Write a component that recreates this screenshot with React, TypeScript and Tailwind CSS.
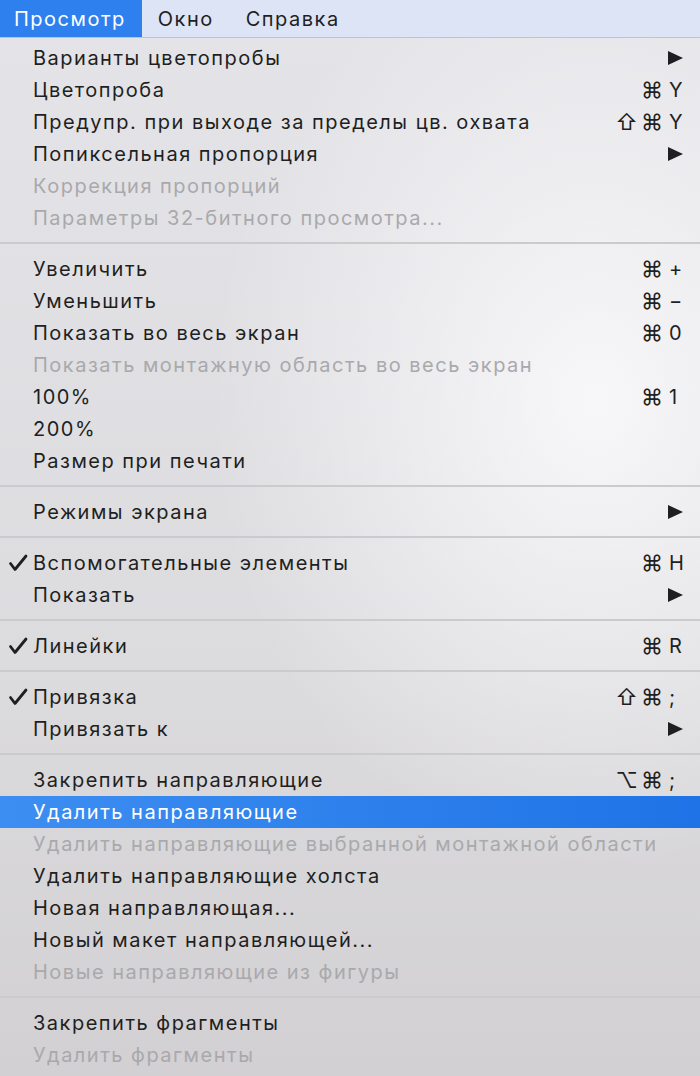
import React from "react";

type Item = {
  label: string;
  mods?: string;
  key?: string;
  sub?: boolean;
  disabled?: boolean;
  checked?: boolean;
  active?: boolean;
};

const sections: Item[][] = [
  [
    { label: "Варианты цветопробы", sub: true },
    { label: "Цветопроба", mods: "⌘", key: "Y" },
    { label: "Предупр. при выходе за пределы цв. охвата", mods: "⇧⌘", key: "Y" },
    { label: "Попиксельная пропорция", sub: true },
    { label: "Коррекция пропорций", disabled: true },
    { label: "Параметры 32-битного просмотра...", disabled: true },
  ],
  [
    { label: "Увеличить", mods: "⌘", key: "+" },
    { label: "Уменьшить", mods: "⌘", key: "−" },
    { label: "Показать во весь экран", mods: "⌘", key: "0" },
    { label: "Показать монтажную область во весь экран", disabled: true },
    { label: "100%", mods: "⌘", key: "1" },
    { label: "200%" },
    { label: "Размер при печати" },
  ],
  [{ label: "Режимы экрана", sub: true }],
  [
    { label: "Вспомогательные элементы", mods: "⌘", key: "H", checked: true },
    { label: "Показать", sub: true },
  ],
  [{ label: "Линейки", mods: "⌘", key: "R", checked: true }],
  [
    { label: "Привязка", mods: "⇧⌘", key: ";", checked: true },
    { label: "Привязать к", sub: true },
  ],
  [
    { label: "Закрепить направляющие", mods: "⌥⌘", key: ";" },
    { label: "Удалить направляющие", active: true },
    { label: "Удалить направляющие выбранной монтажной области", disabled: true },
    { label: "Удалить направляющие холста" },
    { label: "Новая направляющая..." },
    { label: "Новый макет направляющей..." },
    { label: "Новые направляющие из фигуры", disabled: true },
  ],
  [
    { label: "Закрепить фрагменты" },
    { label: "Удалить фрагменты", disabled: true },
  ],
];

function Check() {
  return (
    <svg width="20" height="18" viewBox="0 0 20 18" className="shrink-0">
      <path d="M2.5 9.5 L7 15.5 L18 2" fill="none" stroke="#1f1f21" strokeWidth="2.8" strokeLinecap="round" strokeLinejoin="round" />
    </svg>
  );
}

function Arrow() {
  return (
    <svg width="15" height="14" viewBox="0 0 15 14">
      <polygon points="0,0 15,7 0,14" fill="#1f1f21" />
    </svg>
  );
}

function Row({ item }: { item: Item }) {
  const color = item.active ? "text-white" : item.disabled ? "text-[#a9a9ac]" : "text-[#1f1f21]";
  return (
    <div
      className={`flex h-[32px] items-center ${color} ${
        item.active ? "bg-[linear-gradient(to_right,#3d8ef2,#1f73e6)]" : ""
      }`}
    >
      <div className="flex w-[33px] shrink-0 justify-center pl-[2px]">{item.checked ? <Check /> : null}</div>
      <div className="min-w-0 flex-1 whitespace-nowrap tracking-[1.5px]">{item.label}</div>
      {item.sub ? (
        <div className="shrink-0 pr-[17px]">
          <Arrow />
        </div>
      ) : item.key ? (
        <div className="flex shrink-0 items-center pr-[14px]">
          <span className="text-[22px] tracking-[3px]">{item.mods}</span>
          <span className="w-[20px] pl-[3px] text-left">{item.key}</span>
        </div>
      ) : null}
    </div>
  );
}

export default function App() {
  return (
    <div
      className="h-[1076px] w-[700px] overflow-hidden text-[20px] leading-none"
      style={{ fontFamily: "Inter, 'DejaVu Sans', sans-serif" }}
    >
      <div className="flex h-[38px] items-stretch border-b border-[#bfc3cc] bg-[#dde4f5] tracking-[1.5px] text-[#1f1f24]">
        <div className="flex items-center bg-[#2f80ef] pl-[14px] pr-[16px] text-white">Просмотр</div>
        <div className="flex items-center px-[16px]">Окно</div>
        <div className="flex items-center px-[16px]">Справка</div>
      </div>
      <div className="h-[1038px] bg-[radial-gradient(ellipse_55%_45%_at_85%_35%,rgba(250,250,252,0.9),rgba(250,250,252,0)_100%),linear-gradient(to_bottom,#e4e4e8,#dcdbde_60%,#d2d0d2)] pt-[4px]">
        {sections.map((sec, i) => (
          <div key={i}>
            {i > 0 && (
              <div className="pb-[9px] pt-[8px]">
                <div className="h-[2px] bg-[#cbcbce]" />
              </div>
            )}
            {sec.map((it, j) => (
              <Row key={j} item={it} />
            ))}
          </div>
        ))}
      </div>
    </div>
  );
}
